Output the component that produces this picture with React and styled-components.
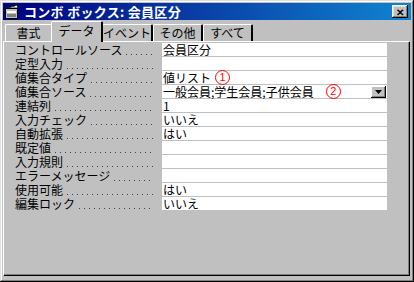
import styled, { createGlobalStyle } from 'styled-components'

const GlobalStyle = createGlobalStyle`
    html, body {
        margin: 0;
        padding: 0;
        background: #c0c0c0;
    }
    * {
        box-sizing: border-box;
    }
`

const tabs = [
    { label: '書式', width: 48 },
    { label: 'データ', width: 52, active: true },
    { label: 'イベント', width: 51 },
    { label: 'その他', width: 50 },
    { label: 'すべて', width: 50 },
]

const rows = [
    { label: 'コントロールソース', value: '会員区分' },
    { label: '定型入力', value: '' },
    { label: '値集合タイプ', value: '値リスト', mark: '1' },
    { label: '値集合ソース', value: '一般会員;学生会員;子供会員', mark: '2', dropdown: true },
    { label: '連結列', value: '1' },
    { label: '入力チェック', value: 'いいえ' },
    { label: '自動拡張', value: 'はい' },
    { label: '既定値', value: '' },
    { label: '入力規則', value: '' },
    { label: 'エラーメッセージ', value: '' },
    { label: '使用可能', value: 'はい' },
    { label: '編集ロック', value: 'いいえ' },
]

const App = () => {
    return (
        <>
            <GlobalStyle />
            <Window>
                <TitleBar>
                    <TitleIcon width="15" height="14" viewBox="0 0 15 14">
                        <rect x="0.5" y="3.5" width="12" height="10" fill="#c0c0c0" stroke="#000" />
                        <rect x="2" y="6" width="9" height="2" fill="#fff" />
                        <rect x="2" y="9" width="9" height="3" fill="#808080" />
                        <path d="M1 3 L12 0 L13 3 Z" fill="#fff" stroke="#000" strokeWidth="0.8" />
                        <path d="M4 2.2 L6 1.6 M8 1.1 L10 0.6" stroke="#000" strokeWidth="1.2" />
                    </TitleIcon>
                    <TitleText>コンボ&nbsp;ボックス:&nbsp;会員区分</TitleText>
                    <CloseButton>✕</CloseButton>
                </TitleBar>
                <TabStrip>
                    {tabs.map((t) => (
                        <Tab key={t.label} $active={t.active} $width={t.width}>
                            {t.label}
                        </Tab>
                    ))}
                </TabStrip>
                <Panel>
                    <PropertyGrid>
                        {rows.map((r) => (
                            <Row key={r.label}>
                                <Label>
                                    <span>{r.label}</span>
                                    <Leader />
                                </Label>
                                <Field>
                                    <FieldText>{r.value}</FieldText>
                                    {r.mark && <Mark $second={r.dropdown}>{r.mark}</Mark>}
                                    {r.dropdown && (
                                        <DropButton>
                                            <svg width="7" height="4" viewBox="0 0 7 4">
                                                <path d="M0 0 H7 L3.5 4 Z" fill="#000" />
                                            </svg>
                                        </DropButton>
                                    )}
                                </Field>
                            </Row>
                        ))}
                    </PropertyGrid>
                </Panel>
            </Window>
        </>
    )
}

export default App

const Window = styled.div`
    width: 414px;
    height: 282px;
    background: #c0c0c0;
    padding: 3px 3px 5px 3px;
    display: flex;
    flex-direction: column;
    box-shadow: inset -1px -1px #000, inset 1px 1px #dfdfdf,
        inset -2px -2px #808080, inset 2px 2px #fff;
    font-family: "Noto Sans CJK JP", "Noto Sans", sans-serif;
    font-size: 12px;
    color: #000;
`

const TitleBar = styled.div`
    height: 17px;
    display: flex;
    align-items: center;
    padding: 0 3px 0 2px;
    background: linear-gradient(to right, #000080, #1084d0);
`

const TitleIcon = styled.svg`
    flex: none;
    margin-right: 4px;
`

const TitleText = styled.div`
    flex: 1;
    color: #fff;
    font-weight: bold;
    font-size: 13px;
    line-height: 16px;
    letter-spacing: 0.3px;
    white-space: nowrap;
`

const CloseButton = styled.div`
    width: 16px;
    height: 13px;
    background: #c0c0c0;
    display: flex;
    align-items: center;
    justify-content: center;
    font-size: 10px;
    font-weight: bold;
    line-height: 1;
    box-shadow: inset -1px -1px #000, inset 1px 1px #fff,
        inset -2px -2px #808080, inset 2px 2px #dfdfdf;
`

const TabStrip = styled.div`
    height: 21px;
    display: flex;
    align-items: flex-end;
    padding-left: 2px;
    position: relative;
    z-index: 1;
`

const Tab = styled.div`
    width: ${(p) => p.$width}px;
    height: ${(p) => (p.$active ? 21 : 17)}px;
    margin-bottom: ${(p) => (p.$active ? -1 : 0)}px;
    margin-left: ${(p) => (p.$active ? -2 : 0)}px;
    margin-right: ${(p) => (p.$active ? -1 : 0)}px;
    background: #c0c0c0;
    border-top: 1px solid #fff;
    border-left: 1px solid #fff;
    border-right: 2px solid #000;
    border-top-left-radius: 2px;
    border-top-right-radius: 2px;
    display: flex;
    align-items: ${(p) => (p.$active ? 'flex-start' : 'center')};
    padding-top: ${(p) => (p.$active ? 1 : 0)}px;
    justify-content: center;
    font-size: 12px;
    line-height: 16px;
    white-space: nowrap;
    position: relative;
    z-index: ${(p) => (p.$active ? 2 : 1)};
`

const Panel = styled.div`
    flex: 1;
    border-top: 1px solid #fff;
    border-left: 1px solid #fff;
    box-shadow: inset -1px -1px #808080, 1px 1px #000;
    margin-right: 2px;
    margin-bottom: 2px;
    padding: 1px 0 0 11px;
`

const PropertyGrid = styled.div`
    display: grid;
    grid-template-columns: 147px 225px;
`

const Row = styled.div`
    display: contents;
`

const Label = styled.div`
    height: 14px;
    display: flex;
    align-items: center;
    line-height: 14px;
    white-space: nowrap;
    padding-right: 8px;
`

const Leader = styled.span`
    flex: 1;
    height: 1px;
    margin-top: 8px;
    margin-left: 4px;
    background-image: repeating-linear-gradient(
        to right,
        #404040 0 1px,
        transparent 1px 5px
    );
`

const Field = styled.div`
    height: 13px;
    margin-bottom: 1px;
    background: #fff;
    display: flex;
    align-items: center;
    padding-left: 1px;
    position: relative;
`

const FieldText = styled.span`
    line-height: 13px;
    white-space: nowrap;
`

const Mark = styled.span`
    flex: none;
    width: 15px;
    height: 15px;
    border: 1.5px solid #f00;
    border-radius: 50%;
    color: #f00;
    font-family: "Liberation Sans", Arial, sans-serif;
    font-size: 11px;
    line-height: 12px;
    text-align: center;
    margin-left: ${(p) => (p.$second ? 12 : 4)}px;
`

const DropButton = styled.div`
    position: absolute;
    right: 1px;
    top: 1px;
    width: 15px;
    height: 12px;
    background: #c0c0c0;
    display: flex;
    align-items: center;
    justify-content: center;
    box-shadow: inset -1px -1px #000, inset 1px 1px #fff,
        inset -2px -2px #808080;
`
